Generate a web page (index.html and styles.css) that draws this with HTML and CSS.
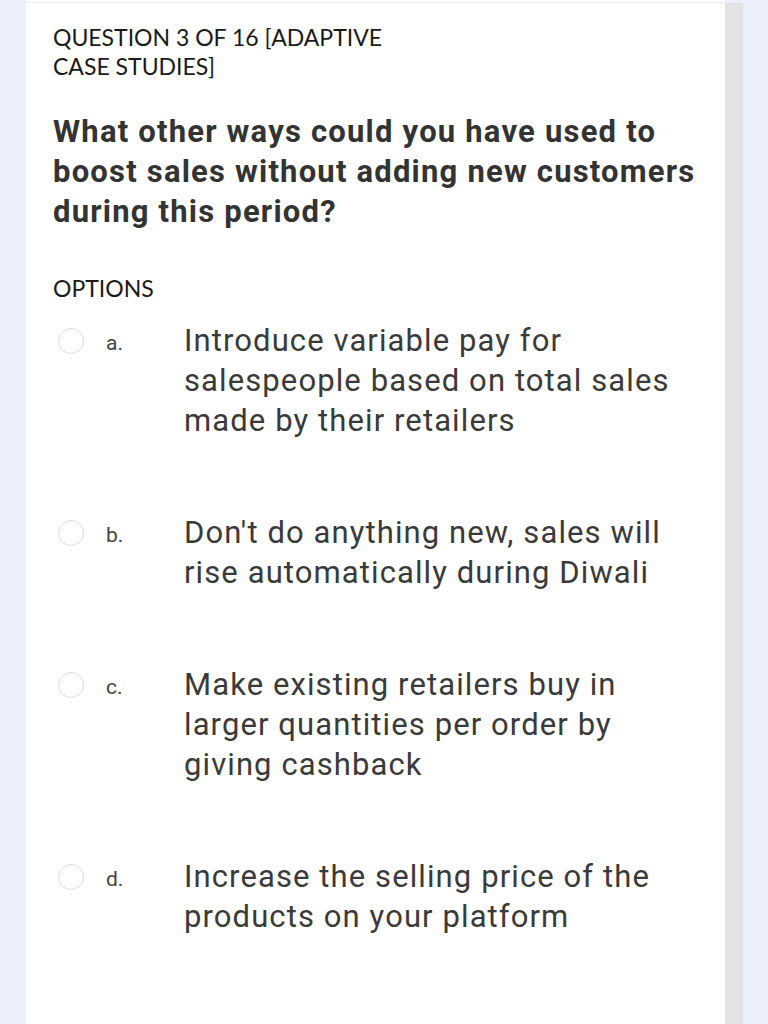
FILE: index.html
```html
<!DOCTYPE html>
<html lang="en">
<head>
<meta charset="utf-8">
<title>Question 3 of 16</title>
<link rel="stylesheet" href="styles.css">
</head>
<body>
<div class="page">
  <main class="card">
    <header class="qhead">QUESTION 3 OF 16 [ADAPTIVE CASE STUDIES]</header>
    <h1 class="question">What other ways could you have used to boost sales without adding new customers during this period?</h1>
    <div class="options-label">OPTIONS</div>
    <ul class="options">
      <li class="opt">
        <span class="radio"></span>
        <span class="letter">a.</span>
        <span class="text">Introduce variable pay for salespeople based on total sales made by their retailers</span>
      </li>
      <li class="opt">
        <span class="radio"></span>
        <span class="letter">b.</span>
        <span class="text">Don't do anything new, sales will rise automatically during Diwali</span>
      </li>
      <li class="opt">
        <span class="radio"></span>
        <span class="letter">c.</span>
        <span class="text">Make existing retailers buy in larger quantities per order by giving cashback</span>
      </li>
      <li class="opt">
        <span class="radio"></span>
        <span class="letter">d.</span>
        <span class="text">Increase the selling price of the products on your platform</span>
      </li>
    </ul>
  </main>
  <div class="scrollbar"></div>
</div>
</body>
</html>
```

FILE: styles.css
```css
html, body {
  margin: 0;
  padding: 0;
  background: #eaeff9;
}

.page {
  display: flex;
  height: 1024px;
  overflow: hidden;
}

.card {
  margin-left: 26px;
  width: 699px;
  box-sizing: border-box;
  padding: 23px 27px 0 27px;
  background: linear-gradient(#ffffff 0 2px, #ececec 2px 3px, #ffffff 3px);
}

.scrollbar {
  width: 18px;
  margin-top: 3px;
  background: #e3e3e3;
}

.qhead {
  width: 350px;
  font-family: Lato, "Open Sans", sans-serif;
  font-size: 23px;
  line-height: 29px;
  color: #1a1a1a;
}

.question {
  margin: 31px 0 0 0;
  font-family: Roboto, "Liberation Sans", sans-serif;
  font-weight: 700;
  font-size: 31px;
  letter-spacing: 1.2px;
  line-height: 40px;
  color: #333333;
}

.options-label {
  margin-top: 44px;
  font-family: Lato, "Open Sans", sans-serif;
  font-size: 23px;
  line-height: 25px;
  color: #1a1a1a;
}

.options {
  list-style: none;
  margin: 20px 0 0 0;
  padding: 0;
  display: flex;
  flex-direction: column;
  gap: 72px;
}

.opt {
  display: grid;
  grid-template-columns: 53px 78px 1fr;
  align-items: start;
}

.radio {
  width: 26px;
  height: 26px;
  box-sizing: border-box;
  margin: 7px 0 0 5px;
  border: 1.5px solid #dcdcdc;
  border-radius: 50%;
}

.letter {
  font-family: Roboto, "Liberation Sans", sans-serif;
  font-size: 21px;
  line-height: 40px;
  padding-top: 2px;
  color: #444444;
}

.text {
  font-family: Roboto, "Liberation Sans", sans-serif;
  font-size: 31px;
  letter-spacing: 1.1px;
  line-height: 40px;
  color: #3a3a3a;
}
```
